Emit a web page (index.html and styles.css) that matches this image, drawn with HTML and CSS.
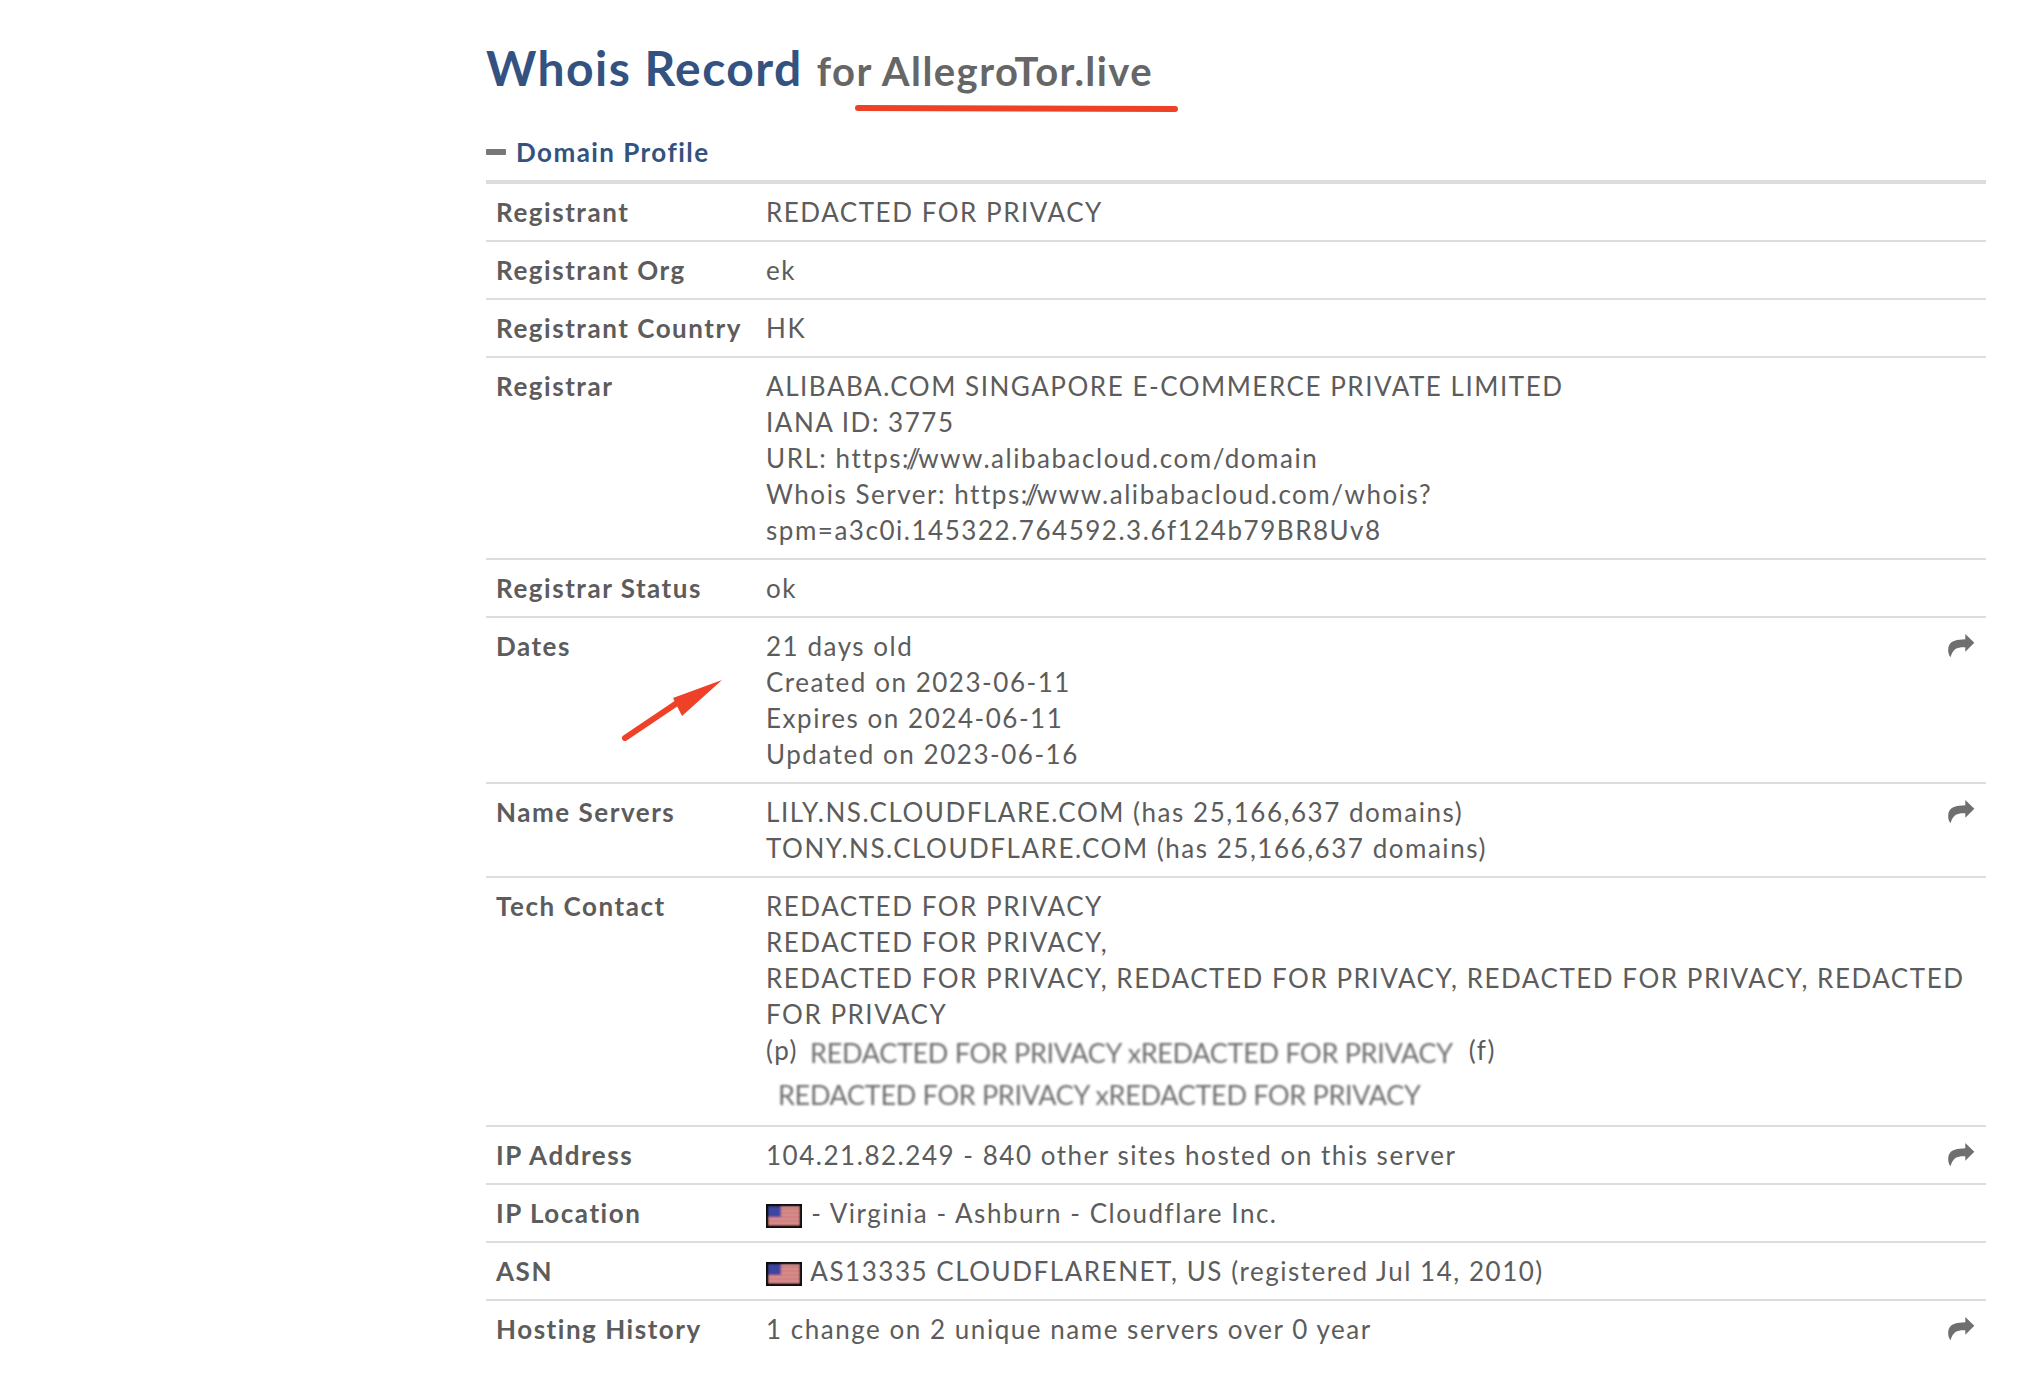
FILE: index.html
```html
<!DOCTYPE html>
<html lang="en">
<head>
<meta charset="utf-8">
<title>Whois Record for AllegroTor.live</title>
<link rel="stylesheet" href="styles.css">
</head>
<body>
<main class="page">
  <h1 class="title"><span class="title-main">Whois Record</span><span class="title-sub">for AllegroTor.live</span></h1>
  <h2 class="section"><span class="dash"></span>Domain Profile</h2>
  <div class="table">
    <div class="row"><div class="label">Registrant</div><div class="value">REDACTED FOR PRIVACY</div></div>
    <div class="row"><div class="label">Registrant Org</div><div class="value">ek</div></div>
    <div class="row"><div class="label">Registrant Country</div><div class="value">HK</div></div>
    <div class="row"><div class="label">Registrar</div><div class="value">ALIBABA.COM SINGAPORE E-COMMERCE PRIVATE LIMITED<br>IANA ID: 3775<br>URL: https<span class="slash">://</span>www.alibabacloud.com/domain<br>Whois Server: https<span class="slash">://</span>www.alibabacloud.com/whois?<br>spm=a3c0i.145322.764592.3.6f124b79BR8Uv8</div></div>
    <div class="row"><div class="label">Registrar Status</div><div class="value">ok</div></div>
    <div class="row"><div class="label">Dates</div><div class="value">21 days old<br>Created on 2023-06-11<br>Expires on 2024-06-11<br>Updated on 2023-06-16</div>
      <svg class="share" viewBox="0 0 27 24"><path d="M17.300 0L26.300 8.700 17.300 17.700V13.300C10 13 5 14 2.500 23.300 0 20-.5 15 1 11.500 3 7 9 5.500 17.300 5.300z"/></svg></div>
    <div class="row"><div class="label">Name Servers</div><div class="value">LILY.NS.CLOUDFLARE.COM (has 25,166,637 domains)<br>TONY.NS.CLOUDFLARE.COM (has 25,166,637 domains)</div>
      <svg class="share" viewBox="0 0 27 24"><path d="M17.300 0L26.300 8.700 17.300 17.700V13.300C10 13 5 14 2.500 23.300 0 20-.5 15 1 11.500 3 7 9 5.500 17.300 5.300z"/></svg></div>
    <div class="row"><div class="label">Tech Contact</div><div class="value">REDACTED FOR PRIVACY<br>REDACTED FOR PRIVACY,<br>REDACTED FOR PRIVACY, REDACTED FOR PRIVACY, REDACTED FOR PRIVACY, REDACTED FOR PRIVACY
      <div class="contact"><span>(p)</span><span class="blur blur-inline">REDACTED FOR PRIVACY xREDACTED FOR PRIVACY</span><span>(f)</span></div>
      <div class="contact contact-second"><span class="blur">REDACTED FOR PRIVACY xREDACTED FOR PRIVACY</span></div></div></div>
    <div class="row"><div class="label">IP Address</div><div class="value">104.21.82.249 - 840 other sites hosted on this server</div>
      <svg class="share" viewBox="0 0 27 24"><path d="M17.300 0L26.300 8.700 17.300 17.700V13.300C10 13 5 14 2.500 23.300 0 20-.5 15 1 11.500 3 7 9 5.500 17.300 5.300z"/></svg></div>
    <div class="row"><div class="label">IP Location</div><div class="value"><svg class="flag" viewBox="0 0 36 24"><use href="#us"/></svg> - Virginia - Ashburn - Cloudflare Inc.</div></div>
    <div class="row"><div class="label">ASN</div><div class="value"><svg class="flag" viewBox="0 0 36 24"><use href="#us"/></svg> AS13335 CLOUDFLARENET, US (registered Jul 14, 2010)</div></div>
    <div class="row row-last"><div class="label">Hosting History</div><div class="value">1 change on 2 unique name servers over 0 year</div>
      <svg class="share" viewBox="0 0 27 24"><path d="M17.300 0L26.300 8.700 17.300 17.700V13.300C10 13 5 14 2.500 23.300 0 20-.5 15 1 11.500 3 7 9 5.500 17.300 5.300z"/></svg></div>
  </div>
</main>
<svg class="defs" width="0" height="0">
  <defs>
    <filter id="soft" x="-10%" y="-10%" width="120%" height="120%"><feGaussianBlur stdDeviation="1"/></filter>
    <g id="us">
      <rect width="36" height="24" fill="#0a0a0a"/>
      <g filter="url(#soft)">
        <rect x="2" y="2" width="32" height="20" fill="#dc9c9a"/>
        <path d="M2 5h32M2 9h32M2 13h32M2 17h32M2 21h32" stroke="#c86a6a" stroke-width="1.800"/>
        <rect x="2" y="2" width="13" height="11" fill="#3d45a0"/>
      </g>
      <rect x="1" y="1" width="34" height="22" fill="none" stroke="#0a0a0a" stroke-width="2" opacity=".6"/>
    </g>
  </defs>
</svg>
<svg class="annotation underline" viewBox="0 0 326 10"><path d="M3 4L320 5" /></svg>
<svg class="annotation arrow" viewBox="0 0 100 62"><path class="shaft" d="M3 59L55 24"/><path class="head" d="M100 1L51 19 60 37z"/></svg>
</body>
</html>
```
FILE: styles.css
```css
* { box-sizing: border-box; }
html, body { margin: 0; background: #fff; }
body { height: 1382px; overflow: hidden; position: relative; font-family: Lato, "Open Sans", sans-serif; color: #5c5c5c; }
.page { width: 1500px; margin-left: 486px; padding-top: 37px; }
.title { margin: 0; font-weight: 700; line-height: 62px; white-space: nowrap; }
.title-main { font-size: 48px; color: #34527f; letter-spacing: 1.45px; }
.title-sub { font-size: 40px; color: #666; margin-left: 14px; letter-spacing: 1.45px; }
.section { margin: 30px 0 0; display: flex; align-items: center; font-size: 26px; line-height: 34px; font-weight: 700; color: #34527f; letter-spacing: 1.45px; padding-bottom: 11px; border-bottom: 4px solid #ddd; }
.dash { width: 20px; height: 6px; border-radius: 1px; background: #777; margin-right: 10px; }
.row { display: flex; position: relative; padding: 10px; border-bottom: 2px solid #ddd; font-size: 26px; line-height: 36px; letter-spacing: 1.53px; }
.row-last { border-bottom: 0; }
.label { width: 270px; flex: none; font-weight: 700; white-space: nowrap; }
.value { flex: 1; min-width: 0; overflow-wrap: break-word; }
.slash { letter-spacing: -2.7px; }
.contact { display: flex; gap: 12px; line-height: 42px; align-items: center; margin-top: -3px; }
.contact-second { padding-left: 12px; margin-top: 0; margin-bottom: 2px; }
.blur { font-size: 27px; letter-spacing: -0.3px; color: #6e6e6e; filter: blur(0.8px); position: relative; top: 3px; }
.blur-inline { margin-right: 4px; }
.share { position: absolute; right: 11px; top: 16px; width: 27px; height: 24px; fill: #6f6f6f; }
.flag { width: 36px; height: 24px; vertical-align: -5px; margin-right: 1px; }
.defs { position: absolute; }
.annotation { position: absolute; fill: none; }
.underline { left: 855px; top: 104px; width: 326px; height: 10px; stroke: #ee4128; stroke-width: 6px; stroke-linecap: round; }
.arrow { left: 622px; top: 679px; width: 100px; height: 62px; }
.shaft { stroke: #ee4128; stroke-width: 6px; stroke-linecap: round; }
.head { fill: #ee4128; }
```
